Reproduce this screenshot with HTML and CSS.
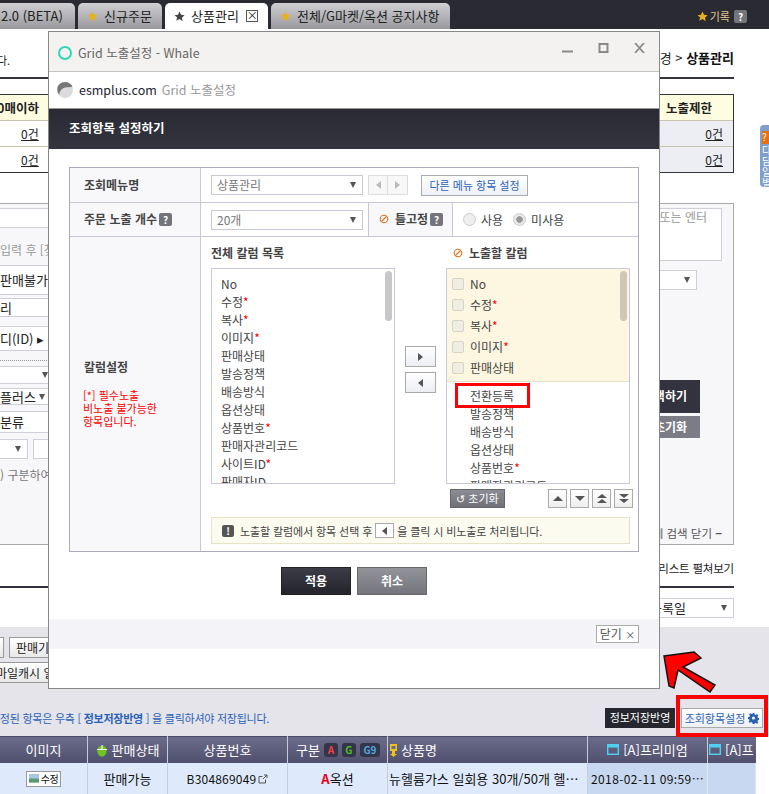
FILE: index.html
```html
<!DOCTYPE html>
<html lang="ko">

<head>
    <meta charset="UTF-8">
    <title>Grid 노출설정</title>
    <link rel="stylesheet" href="styles.css">
</head>

<body>
    <svg class="sprite">
        <symbol id="star" viewBox="0 0 12 12"><path d="M6 .5l1.7 3.6 3.8.5-2.8 2.7.7 3.9L6 8.8 2.600 10.700l.7-3.900L.5 4.600l3.800-.5z"/></symbol>
        <symbol id="ban" viewBox="0 0 10 10"><circle cx="5" cy="5" r="3.800" fill="none" stroke="#e07020" stroke-width="1.100"/><path d="M2.500 7.500l5-5" stroke="#e07020" stroke-width="1.100"/></symbol>
        <symbol id="win" viewBox="0 0 12 11"><rect x=".7" y=".7" width="10.600" height="9.600" fill="none" stroke="#4fd0f0" stroke-width="1.400"/><rect x="1" y="1" width="10" height="2.500" fill="#4fd0f0"/></symbol>
    </svg>

    <!-- tab bar -->
    <div class="tabbar">
        <div class="tab tab-first">2.0 (BETA)</div>
        <div class="tab tab-w2"><svg class="tab-star"><use href="#star"/></svg>신규주문</div>
        <div class="tab tab-w3 on"><svg class="tab-star"><use href="#star"/></svg>상품관리<span class="tab-x">×</span></div>
        <div class="tab tab-w4"><svg class="tab-star"><use href="#star"/></svg>전체/G마켓/옥션 공지사항</div>
        <div class="tab-right"><svg class="tab-star"><use href="#star"/></svg>기록<span class="q q-top">?</span></div>
    </div>

    <!-- page behind the popup -->
    <div class="crumb">
        <span class="crumb-l">다.</span>
        <span>변경 &gt; <b>상품관리</b></span>
    </div>

    <div class="summary">
        <div class="sum-row sum-head"><span class="clip-l">0매이하</span><span class="sum-last">노출제한</span></div>
        <div class="sum-row"><u class="cnt-l">0건</u><span class="sum-last shade"><u>0건</u></span></div>
        <div class="sum-row"><u class="cnt-l">0건</u><span class="sum-last shade"><u>0건</u></span></div>
    </div>

    <div class="search">
        <div class="s-left">
            <div class="fld f1"></div>
            <div class="fld f2 hint">입력 후 [찾기</div>
            <div class="fld f3">판매불가</div>
            <div class="fld f4">리</div>
            <div class="fld f5">디(ID) ▸</div>
            <div class="dots"></div>
            <div class="fld f6"><i class="arr"></i></div>
            <div class="fld f7">플러스 <i class="arr"></i></div>
            <div class="fld f8">분류</div>
            <div class="f9"><div class="fld f9a"><i class="arr"></i></div><div class="fld f9b"></div></div>
            <div class="hint f10">) 구분하여</div>
        </div>
        <div class="s-right">
            <div class="area hint">또는 엔터</div>
            <div class="fld r-sel"><i class="arr"></i></div>
            <div class="r-btn r-dark">검색하기</div>
            <div class="r-btn r-gray">초기화</div>
            <div class="r-close">상세 검색 닫기 <b>−</b></div>
        </div>
    </div>

    <div class="listbar"><span>리스트 펼쳐보기</span></div>
    <div class="sortbar"><div class="fld sort">등록일<i class="arr"></i></div></div>

    <div class="band">
        <div class="band-btns"><div class="old-btn b0"></div><div class="old-btn b1">판매기간</div></div>
        <div class="old-btn b2">마일캐시 일괄</div>
        <div class="band-msg">
            <p class="save-note">수정된 항목은 우측 [ <b>정보저장반영</b> ] 을 클릭하셔야 저장됩니다.</p>
            <div class="save-btn">정보저장반영</div>
            <div class="set-btn">조회항목설정 <svg class="gear" viewBox="0 0 12 12"><path d="M5 0h2l.3 1.700 1.100.5L9.900 1.200l1.400 1.400-1 1.500.5 1.100 1.700.3v2l-1.700.3-.5 1.100 1 1.500-1.400 1.400-1.500-1-1.100.5L7 12H5l-.3-1.700-1.100-.5-1.500 1L.7 9.400l1-1.500-.5-1.100L0 6.500v-2l1.700-.3.5-1.100-1-1.500L2.600.2l1.500 1 1.100-.5z" fill="#2a62b8"/><circle cx="6" cy="5.500" r="1.700" fill="#fff"/></svg></div>
        </div>
    </div>

    <div class="grid grid-head">
        <div class="gc">이미지</div>
        <div class="gc"><svg class="ico-mouse" viewBox="0 0 10 14"><ellipse cx="5" cy="8" rx="4.600" ry="5.600" fill="#6cc820"/><path d="M0 6.500h10M5 2v4.500" stroke="#fff"/></svg>판매상태</div>
        <div class="gc">상품번호</div>
        <div class="gc gc-kind">구분 <span class="mk mk-a">A</span><span class="mk mk-g">G</span><span class="mk mk-9">G9</span></div>
        <div class="gc gc-l"><svg class="ico-lamp" viewBox="0 0 9 14"><path d="M1 1h7v7H1zM3 8h3v3h2l-3.500 3L1 11h2z" fill="#f0c020"/><rect x="2.500" y="3" width="4" height="3" fill="#6a6a8a"/></svg>상품명</div>
        <div class="gc"><svg class="ico-win"><use href="#win"/></svg>[A]프리미엄</div>
        <div class="gc gc-clip"><svg class="ico-win"><use href="#win"/></svg>[A]프</div>
    </div>
    <div class="grid grid-row">
        <div class="gc"><span class="edit"><svg class="ico-img" viewBox="0 0 12 10"><rect width="12" height="10" fill="#5a9a70"/><rect y="0" width="12" height="5" fill="#a8c8e8"/></svg>수정</span></div>
        <div class="gc">판매가능</div>
        <div class="gc num">B304869049 <svg class="ico-out" viewBox="0 0 10 10"><path d="M7.500 5.500V9H1V2.500h3.500M5 5l4-4M6 1h3v3" fill="none" stroke="#555"/></svg></div>
        <div class="gc"><b class="a-red">A</b>옥션</div>
        <div class="gc gc-l">뉴헬륨가스 일회용 30개/50개 헬…</div>
        <div class="gc prem date">2018-02-11 09:59…</div>
        <div class="gc prem"></div>
    </div>

    <div class="side-tab"><span class="side-q">?</span><span class="side-txt">다담일별</span></div>

    <!-- popup window -->
    <div class="popup">
        <div class="win-title">
            <span class="whale"></span>
            <span class="win-name">Grid 노출설정 - Whale</span>
            <span class="win-btns">
                <svg viewBox="0 0 11 10"><path d="M0 8.500h11" stroke="#8a8a8a" stroke-width="2"/></svg>
                <svg viewBox="0 0 11 10"><rect x="1.500" y="1" width="8" height="8" fill="none" stroke="#8a8a8a" stroke-width="2"/></svg>
                <svg viewBox="0 0 11 10"><path d="M1 0l9 10M10 0l-9 10" stroke="#8a8a8a" stroke-width="1.800"/></svg>
            </span>
        </div>
        <div class="win-addr">
            <svg class="globe" viewBox="0 0 16 16"><circle cx="8" cy="8" r="8" fill="#dcdcdc"/><path d="M15.500 4.500C14 1.500 11 0 8 0 4 0 .5 3 .3 7c0 2 .7 4 2 6 0-4 3-7 6-7.500 3-.4 5.700-.2 7.200-1z" fill="#777"/></svg>
            <span class="host">esmplus.com</span><span class="addr-t">Grid 노출설정</span>
        </div>
        <div class="pop-head">조회항목 설정하기</div>

        <div class="pop-body">
            <div class="panel">
                <div class="row row1">
                    <div class="th">조회메뉴명</div>
                    <div class="td">
                        <div class="sel sel-w">상품관리<i class="arr"></i></div>
                        <div class="pager"><span><i class="tri tri-l"></i></span><span><i class="tri tri-r"></i></span></div>
                        <div class="other-btn">다른 메뉴 항목 설정</div>
                    </div>
                </div>
                <div class="row row2">
                    <div class="th">주문 노출 개수<span class="q">?</span></div>
                    <div class="td td-count"><div class="sel sel-w">20개<i class="arr"></i></div></div>
                    <div class="th th-fix"><svg class="ban"><use href="#ban"/></svg>틀고정<span class="q">?</span></div>
                    <div class="td td-radio">
                        <span class="radio"></span><span>사용</span>
                        <span class="radio radio-on"></span><span>미사용</span>
                    </div>
                </div>
                <div class="row row3">
                    <div class="th th-col">
                        <div class="col-name">칼럼설정</div>
                        <p class="col-note">[*] 필수노출<br>비노출 불가능한<br>항목입니다.</p>
                    </div>
                    <div class="td-col">
                        <div class="cols">
                            <div class="col-box">
                                <div class="col-title">전체 칼럼 목록</div>
                                <div class="list list-all">
                                    <i class="thumb"></i>
                                    <div>No</div>
                                    <div>수정<em>*</em></div>
                                    <div>복사<em>*</em></div>
                                    <div>이미지<em>*</em></div>
                                    <div>판매상태</div>
                                    <div>발송정책</div>
                                    <div>배송방식</div>
                                    <div>옵션상태</div>
                                    <div>상품번호<em>*</em></div>
                                    <div>판매자관리코드</div>
                                    <div>사이트ID<em>*</em></div>
                                    <div>판매자ID</div>
                                </div>
                            </div>
                            <div class="move">
                                <div class="mv-btn"><i class="tri tri-r tri-dark"></i></div>
                                <div class="mv-btn"><i class="tri tri-l tri-dark"></i></div>
                            </div>
                            <div class="col-box">
                                <div class="col-title col-title-r"><svg class="ban"><use href="#ban"/></svg>노출할 칼럼</div>
                                <div class="list list-sel">
                                    <i class="thumb thumb-y"></i>
                                    <div class="fixed">
                                        <div class="chk-row"><i class="chk"></i>No</div>
                                        <div class="chk-row"><i class="chk"></i>수정<em>*</em></div>
                                        <div class="chk-row"><i class="chk"></i>복사<em>*</em></div>
                                        <div class="chk-row"><i class="chk"></i>이미지<em>*</em></div>
                                        <div class="chk-row"><i class="chk"></i>판매상태</div>
                                    </div>
                                    <div class="rest">
                                        <div>전환등록</div>
                                        <div>발송정책</div>
                                        <div>배송방식</div>
                                        <div>옵션상태</div>
                                        <div>상품번호<em>*</em></div>
                                        <div>판매자관리코드</div>
                                    </div>
                                    <span class="mark"></span>
                                </div>
                                <div class="list-tools">
                                    <div class="reset-btn">↺ 초기화</div>
                                    <div class="order">
                                        <span><i class="tri tri-u"></i></span>
                                        <span><i class="tri tri-d"></i></span>
                                        <span class="dbl"><i class="tri tri-u"></i><i class="tri tri-u"></i></span>
                                        <span class="dbl"><i class="tri tri-d"></i><i class="tri tri-d"></i></span>
                                    </div>
                                </div>
                            </div>
                        </div>
                        <div class="notice">
                            <span class="bang">!</span>노출할 칼럼에서 항목 선택 후
                            <span class="mini"><i class="tri tri-l tri-dark"></i></span>
                            을 클릭 시 비노출로 처리됩니다.
                        </div>
                    </div>
                </div>
            </div>

            <div class="actions">
                <div class="act act-ok">적용</div>
                <div class="act act-no">취소</div>
            </div>
        </div>

        <div class="pop-foot"><span class="close-btn">닫기 <small>×</small></span></div>
    </div>

    <!-- annotations on top of the screenshot -->
    <svg class="big-arrow" viewBox="0 0 60 46"><path d="M2 5L32 1l7 6-18 9 32 18-5 7-32-22-4 18-5-2z" fill="#f00" stroke="#111" stroke-width="1.500"/></svg>
    <div class="mark-set"></div>
</body>

</html>
```

FILE: styles.css
```css
* {
    box-sizing: border-box;
}

html,
body {
    margin: 0;
    height: 794px;
    overflow: hidden;
}

body {
    position: relative;
    width: 769px;
    background: #fff;
    color: #222;
    font-family: "Noto Sans CJK KR", "Liberation Sans", sans-serif;
    font-size: 12px;
    line-height: 16px;
}

.sprite {
    display: none;
}

p {
    margin: 0;
}

/* tab bar */
.tabbar {
    display: flex;
    height: 29px;
    padding-top: 3px;
    background: #2a2a33;
    align-items: stretch;
}

.tab {
    display: flex;
    align-items: center;
    margin-right: 3px;
    padding-left: 9px;
    border-radius: 5px 5px 0 0;
    background: linear-gradient(#cfcfd3, #98989e);
    color: #222;
    font-size: 13px;
}

.tab-first {
    width: 75px;
    padding-left: 1px;
    border-radius: 0 5px 0 0;
}

.tab-w2 {
    width: 84px;
}

.tab-w3 {
    width: 103px;
}

.tab-w4 {
    width: 179px;
}

.tab.on {
    background: #fff;
}

.tab-star {
    width: 11px;
    height: 11px;
    margin-right: 6px;
    fill: #e8b020;
}

.on .tab-star {
    fill: #444;
}

.tab-x {
    width: 12px;
    height: 12px;
    margin-left: 7px;
    border: 1px solid #555;
    font-size: 11px;
    line-height: 9px;
    text-align: center;
}

.tab-right {
    display: flex;
    align-items: center;
    margin-left: auto;
    margin-right: 22px;
    color: #e0c88c;
    font-size: 11px;
}

.tab-right .tab-star {
    margin-right: 2px;
}

.q {
    display: inline-block;
    width: 13px;
    height: 13px;
    margin-left: 2px;
    border-radius: 2px;
    background: #74747c;
    color: #fff;
    font-size: 10px;
    font-weight: 700;
    line-height: 13px;
    text-align: center;
    vertical-align: 1px;
}

.q-top {
    margin-left: 4px;
}

/* behind the popup */
.crumb {
    display: flex;
    justify-content: space-between;
    width: 734px;
    height: 50px;
    padding-top: 21px;
    border-bottom: 2px solid #33333d;
    font-size: 13px;
}

.crumb b {
    color: #111;
}

.crumb-l {
    margin-left: -3px;
    margin-top: 2px;
    font-size: 11px;
}

.summary {
    width: 734px;
    margin-top: 15px;
    border-top: 1px solid #33333d;
    border-right: 1px solid #33333d;
    border-bottom: 1px solid #33333d;
}

.sum-row {
    display: flex;
    justify-content: space-between;
    height: 26px;
    border-bottom: 1px solid #c8c4b0;
    line-height: 25px;
}

.sum-row:last-child {
    height: 25px;
    border-bottom: 0;
}

.sum-head {
    background: #fffde0;
    font-weight: 700;
    font-size: 12.500px;
}

.clip-l {
    margin-left: -3px;
}

.cnt-l {
    margin-left: 21px;
}

.sum-last {
    width: 78px;
    padding-right: 10px;
    text-align: center;
}

.shade {
    background: #eceef3;
    text-align: right;
}

.search {
    display: flex;
    justify-content: space-between;
    width: 734px;
    height: 342px;
    margin-top: 30px;
    border: 1px solid #aaa;
    border-left: 0;
    background: #f7f7fa;
}

.fld {
    position: relative;
    display: flex;
    align-items: center;
    border: 1px solid #cfcfd8;
    border-left: 0;
    background: #fff;
    white-space: nowrap;
}

.hint {
    color: #999;
}

.s-left {
    width: 49px;
    overflow: hidden;
}

.f1 {
    height: 20px;
    margin-top: 4px;
}

.f2 {
    height: 33px;
    margin-top: 0;
    background: #f7f7fa;
    border: 0;
    padding-top: 10px;
}

.f3 {
    height: 30px;
    margin-top: 4px;
    font-size: 13px;
}

.f4 {
    height: 19px;
    margin-top: 3px;
    font-size: 13px;
}

.f5 {
    height: 25px;
    margin-top: 9px;
    font-size: 13px;
}

.dots {
    height: 1px;
    margin-top: 9px;
    border-top: 1px dotted #999;
}

.f6 {
    height: 18px;
    margin-top: 5px;
}

.f7 {
    height: 17px;
    margin-top: 4px;
    font-size: 13px;
    gap: 3px;
}

.f8 {
    height: 22px;
    margin-top: 6px;
    font-size: 13px;
}

.f9 {
    display: flex;
    gap: 5px;
    margin-top: 6px;
}

.f9a {
    width: 28px;
    height: 20px;
    justify-content: flex-end;
    padding-right: 6px;
}

.f9b {
    width: 16px;
    height: 20px;
    border-left: 1px solid #cfcfd8;
}

.f10 {
    margin-top: 8px;
    white-space: nowrap;
    color: #777;
}

.s-right {
    width: 80px;
    overflow: hidden;
    display: flex;
    flex-direction: column;
    align-items: flex-end;
    padding-right: 11px;
}

.area {
    width: 70px;
    height: 53px;
    margin-top: 4px;
    padding: 0 14px 0 0;
    border: 1px solid #cfcfd8;
    border-left: 0;
    background: #fff;
    text-align: right;
    white-space: nowrap;
}

.r-sel {
    width: 50px;
    height: 20px;
    margin-top: 9px;
    margin-right: 25px;
    justify-content: flex-end;
    padding-right: 6px;
}

.r-btn {
    display: flex;
    justify-content: flex-end;
    width: 60px;
    margin-right: 22px;
    padding-right: 13px;
    color: #fff;
    font-weight: 700;
    white-space: nowrap;
}

.r-dark {
    height: 33px;
    margin-top: 90px;
    background: #33333f;
    line-height: 31px;
}

.r-gray {
    height: 22px;
    margin-top: 3px;
    background: #7c7c86;
    line-height: 21px;
}

.r-close {
    margin-top: 87px;
    color: #555;
    font-size: 11.500px;
    white-space: nowrap;
}

.listbar {
    display: flex;
    justify-content: flex-end;
    width: 734px;
    height: 43px;
    padding-top: 15px;
    border-bottom: 2px solid #33333d;
    font-size: 11.500px;
    letter-spacing: -.2px;
}

.sortbar {
    width: 734px;
    display: flex;
    justify-content: flex-end;
    padding-top: 10px;
    height: 39px;
}

.sort {
    width: 85px;
    height: 20px;
    justify-content: space-between;
    padding: 0 6px 0 1px;
    border-right: 1px solid #cfcfd8;
    font-size: 13px;
}

.arr {
    display: inline-block;
    width: 0;
    height: 0;
    border-top: 6px solid #555;
    border-left: 3px solid transparent;
    border-right: 3px solid transparent;
}

.f6 .arr {
    margin-left: auto;
}

.band {
    height: 109px;
    padding-top: 10px;
    background: #e4e4ea;
}

.band-btns {
    display: flex;
    gap: 5px;
}

.old-btn {
    height: 21px;
    border: 1px solid #999;
    background: linear-gradient(#fff, #e8e8e8);
    white-space: nowrap;
    overflow: hidden;
    line-height: 19px;
}

.b0 {
    width: 4px;
    border-left: 0;
}

.b1 {
    width: 60px;
    padding-left: 6px;
    font-size: 12px;
}

.b2 {
    width: 60px;
    margin-top: 4px;
    border-left: 0;
    font-size: 12px;
    text-indent: -4px;
}

.band-msg {
    display: flex;
    align-items: center;
    margin-top: 25px;
}

.save-note {
    flex: 1;
    margin-left: -10px;
    color: #2a62b8;
    white-space: nowrap;
    font-size: 11px;
    letter-spacing: -.25px;
}

.save-btn {
    width: 70px;
    height: 20px;
    margin-right: 6px;
    background: #26262e;
    color: #fff;
    font-size: 11px;
    line-height: 19px;
    text-align: center;
}

.set-btn {
    display: flex;
    align-items: center;
    justify-content: center;
    gap: 3px;
    width: 82px;
    height: 20px;
    margin-right: 6px;
    border: 1px solid #aaa;
    background: linear-gradient(#fff, #eef0f8);
    color: #2a62b8;
    font-size: 11px;
}

.gear {
    width: 11px;
    height: 11px;
}

.grid {
    display: grid;
    grid-template-columns: 88px 80px 120px 100px 200px 120px 48px;
    width: 756px;
}

.gc {
    display: flex;
    align-items: center;
    justify-content: center;
    border-right: 1px solid #c8ccd8;
    white-space: nowrap;
    font-size: 13px;
    overflow: hidden;
}

.grid-head {
    height: 27px;
    background: linear-gradient(#6c6c8c, #50506e);
    color: #fff;
    box-shadow: inset 0 1px 0 #4a4a66;
}

.grid-row {
    height: 31px;
    background: #deeafc;
    color: #111;
}

.gc-l {
    justify-content: flex-start;
    padding-left: 1px;
}

.gc-kind {
    justify-content: flex-start;
    padding-left: 8px;
}

.gc-clip {
    justify-content: flex-start;
    border-right: 0;
    padding-left: 1px;
}

.prem {
    background: #c8d8f0;
    border-right: 1px solid #dfe6f2;
}

.num {
    font-size: 12px;
    letter-spacing: .2px;
}

.date {
    font-size: 12px;
    letter-spacing: .4px;
}

.mk {
    display: inline-block;
    width: 14px;
    height: 14px;
    margin-left: 4px;
    border-radius: 3px;
    background: #34344a;
    font-size: 10px;
    font-weight: 700;
    line-height: 14px;
    text-align: center;
}

.mk-a {
    color: #f04040;
}

.mk-g {
    color: #50c020;
}

.mk-9 {
    width: 20px;
    color: #50a8e0;
}

.ico-mouse {
    width: 12px;
    height: 14px;
    margin-right: 4px;
}

.ico-lamp {
    width: 9px;
    height: 14px;
    margin-right: 3px;
}

.ico-win {
    width: 12px;
    height: 11px;
    margin-right: 4px;
}

.ico-img {
    width: 10px;
    height: 9px;
    margin-right: 2px;
}

.ico-out {
    width: 10px;
    height: 10px;
    margin-left: 2px;
}

.edit {
    display: flex;
    align-items: center;
    height: 16px;
    padding: 0 2px;
    border: 1px solid #999;
    background: #fff;
    font-size: 10px;
    letter-spacing: -.5px;
}

.a-red {
    color: #f00020;
    font-size: 13px;
}

.side-tab {
    position: absolute;
    top: 125px;
    left: 760px;
    width: 9px;
    height: 62px;
    padding: 6px 0 0 2px;
    overflow: hidden;
    border-radius: 4px 0 0 4px;
    background: #7f9fc8;
    color: #fff;
    font-size: 10px;
    line-height: 11px;
}

.side-q {
    display: block;
    width: 12px;
    height: 13px;
    background: #e87010;
}

.side-txt {
    display: block;
    width: 12px;
}

/* popup */
.popup {
    position: absolute;
    top: 31px;
    left: 48px;
    width: 612px;
    height: 658px;
    display: flex;
    flex-direction: column;
    border: 1px solid #888;
    background: #fff;
    color: #444;
}

.win-title {
    display: flex;
    align-items: center;
    height: 40px;
    padding-left: 9px;
    padding-top: 2px;
    border-bottom: 1px solid #c4c4c4;
    background: #f3f2f0;
}

.whale {
    width: 14px;
    height: 14px;
    margin-right: 6px;
    border: 2px solid #2fd8b8;
    border-radius: 50%;
}

.win-name {
    color: #666;
    font-size: 12.500px;
}

.win-btns {
    display: flex;
    gap: 25px;
    margin-left: auto;
    margin-right: 14px;
    margin-top: -10px;
}

.win-btns svg {
    width: 11px;
    height: 10px;
}

.win-addr {
    display: flex;
    align-items: center;
    height: 37px;
    padding-left: 8px;
    border-bottom: 1px solid #999;
    font-size: 12.500px;
}

.globe {
    width: 16px;
    height: 16px;
    margin-right: 6px;
}

.host {
    margin-right: 5px;
    color: #223;
}

.addr-t {
    color: #999;
}

.pop-head {
    height: 40px;
    padding: 11px 0 0 20px;
    background: linear-gradient(#2a2a34, #34343e);
    color: #fff;
    font-size: 12.500px;
    font-weight: 700;
}

.pop-body {
    padding: 18px 20px 0;
}

.panel {
    height: 385px;
    border: 1px solid #aaaabc;
}

.row {
    display: flex;
    border-bottom: 1px solid #c8c8d8;
}

.row1 {
    height: 35px;
}

.row2 {
    height: 34px;
}

.row3 {
    height: 314px;
    border-bottom: 0;
}

.th {
    display: flex;
    align-items: center;
    width: 131px;
    flex: none;
    padding: 0 0 1px 14px;
    border-right: 1px solid #c8c8d8;
    background: #f8f8fb;
    font-weight: 700;
}

.td {
    display: flex;
    align-items: center;
    padding-left: 10px;
    flex: 1;
}

.td-count {
    flex: none;
    width: 167px;
}

.sel {
    display: flex;
    align-items: center;
    justify-content: space-between;
    height: 20px;
    padding: 0 6px 0 5px;
    border: 1px solid #c8c8d8;
    color: #777;
}

.sel-w {
    width: 152px;
}

.pager {
    display: flex;
    margin-left: 5px;
}

.pager span {
    display: flex;
    align-items: center;
    justify-content: center;
    width: 20px;
    height: 20px;
    border: 1px solid #ddd;
    background: #f8f8f8;
}

.pager span + span {
    border-left: 0;
}

.tri {
    display: inline-block;
    width: 0;
    height: 0;
    border-style: solid;
    border-color: transparent;
}

.tri-l {
    border-width: 4px 5px 4px 0;
    border-right-color: #bbb;
}

.tri-r {
    border-width: 4px 0 4px 5px;
    border-left-color: #bbb;
}

.tri-l.tri-dark {
    border-right-color: #555;
}

.tri-r.tri-dark {
    border-left-color: #555;
}

.tri-u {
    border-width: 0 5px 5px;
    border-bottom-color: #555;
}

.tri-d {
    border-width: 5px 5px 0;
    border-top-color: #555;
}

.other-btn {
    width: 107px;
    height: 21px;
    margin-left: 13px;
    border: 1px solid #aaaab4;
    background: linear-gradient(#fff, #eef0f8);
    color: #2a62b8;
    font-size: 11px;
    line-height: 19px;
    text-align: center;
    white-space: nowrap;
}

.th-fix {
    width: 85px;
    padding-left: 10px;
    border-left: 1px solid #c8c8d8;
}

.ban {
    width: 10px;
    height: 10px;
    margin-right: 6px;
}

.td-radio {
    gap: 5px;
    padding-left: 10px;
}

.radio {
    width: 13px;
    height: 13px;
    border: 1px solid #ccc;
    border-radius: 50%;
    background: #eee;
}

.radio-on {
    margin-left: 5px;
    background: radial-gradient(circle, #999 3px, #e8e8e8 3.500px);
}

.th-col {
    display: block;
    padding-top: 122px;
}

.col-name {
    font-size: 12px;
}

.col-note {
    margin: 14px 0 0 -1px;
    color: #f00;
    font-size: 11px;
    font-weight: 400;
    line-height: 13px;
}

.td-col {
    padding: 8px 0 0 10px;
}

.cols {
    display: flex;
}

.col-box {
    width: 184px;
}

.col-title {
    display: flex;
    align-items: center;
    height: 23px;
    padding-bottom: 7px;
    font-weight: 700;
}

.col-title-r {
    padding-left: 7px;
}

.list {
    position: relative;
    height: 216px;
    border: 1px solid #c8c8d8;
    overflow: hidden;
}

.list em {
    color: #f00;
    font-style: normal;
}

.list-all {
    padding: 6px 0 0 9px;
    line-height: 18px;
}

.thumb {
    position: absolute;
    top: 2px;
    right: 2px;
    width: 7px;
    height: 50px;
    border-radius: 4px;
    background: #c8c8c8;
}

.thumb-y {
    background: #cdc8b5;
}

.fixed {
    height: 113px;
    padding-top: 4px;
    border-bottom: 1px solid #e6e0c4;
    background: #fdf6e0;
}

.chk-row {
    display: flex;
    align-items: center;
    height: 21px;
    padding-left: 5px;
}

.chk {
    width: 12px;
    height: 12px;
    margin-right: 6px;
    border: 1px solid #d8d4c4;
    border-radius: 2px;
    background: #f0eee2;
}

.rest {
    padding: 5px 0 0 23px;
    line-height: 18px;
}

.mark {
    position: absolute;
    top: 114px;
    left: 8px;
    width: 75px;
    height: 25px;
    border: 3px solid #f00;
}

.list-tools {
    display: flex;
    justify-content: space-between;
    margin: 5px -3px 0 4px;
}

.reset-btn {
    width: 55px;
    height: 19px;
    border: 1px solid #666;
    background: linear-gradient(#8c8c94, #707078);
    color: #fff;
    font-size: 11px;
    line-height: 17px;
    text-align: center;
    white-space: nowrap;
}

.order {
    display: flex;
    gap: 3px;
}

.order span {
    display: flex;
    flex-direction: column;
    align-items: center;
    justify-content: center;
    width: 19px;
    height: 19px;
    border: 1px solid #aaa;
    background: linear-gradient(#fff, #eee);
}

.order .dbl {
    gap: 1px;
}

.dbl .tri-u {
    border-width: 0 5px 4px;
}

.dbl .tri-d {
    border-width: 4px 5px 0;
}

.move {
    display: flex;
    flex-direction: column;
    gap: 5px;
    width: 51px;
    padding: 101px 10px 0;
}

.mv-btn {
    display: flex;
    align-items: center;
    justify-content: center;
    height: 21px;
    border: 1px solid #aaa;
    background: linear-gradient(#fff, #eceef4);
}

.notice {
    display: flex;
    align-items: center;
    gap: 1px;
    width: 419px;
    height: 27px;
    margin-top: 9px;
    padding-left: 10px;
    border: 1px solid #e5e2c8;
    background: #fcfbf0;
    font-size: 11px;
    letter-spacing: -.1px;
    white-space: nowrap;
}

.bang {
    width: 12px;
    height: 12px;
    margin-right: 5px;
    border-radius: 2px;
    background: #555;
    color: #fff;
    font-size: 10px;
    font-weight: 700;
    line-height: 12px;
    text-align: center;
}

.mini {
    display: flex;
    align-items: center;
    justify-content: center;
    width: 19px;
    height: 15px;
    margin: 0 2px;
    border: 1px solid #aaa;
    background: #fff;
}

.actions {
    display: flex;
    justify-content: center;
    gap: 6px;
    margin-top: 15px;
}

.act {
    width: 70px;
    height: 28px;
    font-weight: 700;
    line-height: 26px;
    text-align: center;
}

.act-ok {
    border: 1px solid #222;
    background: linear-gradient(#3c3c48, #24242c);
    color: #fff;
}

.act-no {
    border: 1px solid #666;
    background: linear-gradient(#93939a, #74747c);
    color: #fff;
}

.pop-foot {
    display: flex;
    justify-content: flex-end;
    align-items: center;
    height: 30px;
    margin-top: 24px;
    padding: 0 20px 0 0;
    background: #f3f3f8;
}

.close-btn {
    width: 43px;
    height: 18px;
    border: 1px solid #aaa;
    background: #fff;
    color: #555;
    line-height: 16px;
    text-align: center;
}

.big-arrow {
    position: absolute;
    top: 651px;
    left: 662px;
    width: 60px;
    height: 46px;
}

.mark-set {
    position: absolute;
    top: 695px;
    left: 676px;
    width: 92px;
    height: 42px;
    border: 4px solid #f00;
}
```
